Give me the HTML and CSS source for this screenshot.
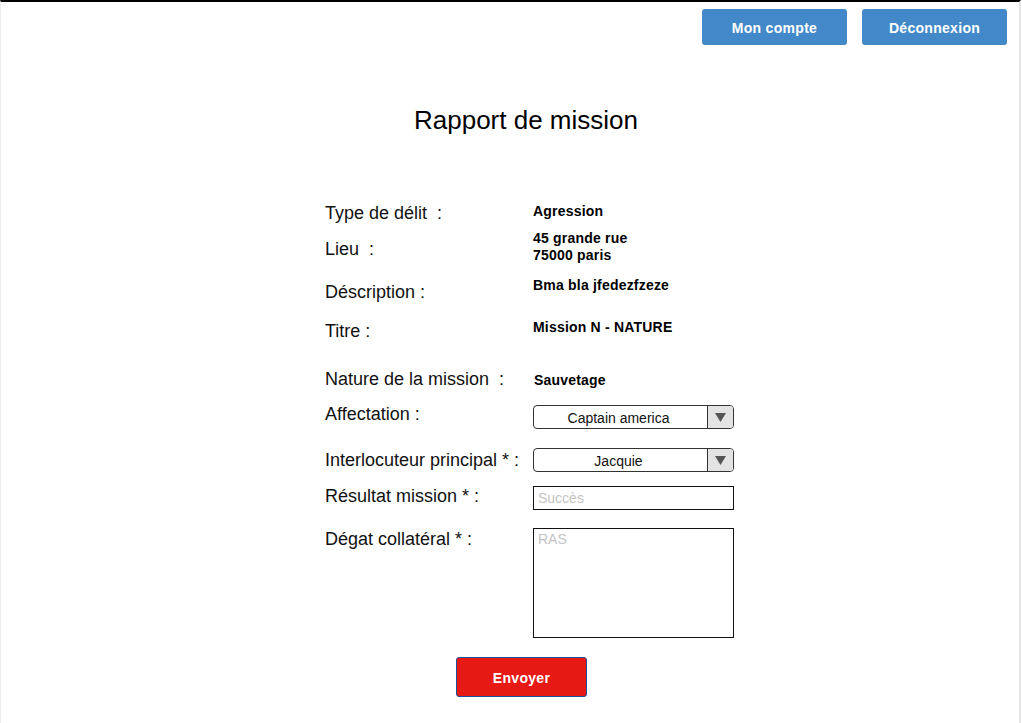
FILE: index.html
```html
<!DOCTYPE html>
<html lang="fr">
<head>
<meta charset="utf-8">
<title>Rapport de mission</title>
<link rel="stylesheet" href="styles.css">
</head>
<body>
<div class="page">
  <header class="topbar">
    <button class="btn btn-blue">Mon compte</button>
    <button class="btn btn-blue">Déconnexion</button>
  </header>

  <h1 class="title">Rapport de mission</h1>

  <form class="form">
    <div class="row r1">
      <span class="label">Type de délit&nbsp; :</span>
      <span class="value">Agression</span>
    </div>
    <div class="row r2">
      <span class="label pad9">Lieu&nbsp; :</span>
      <span class="value">45 grande rue<br>75000 paris</span>
    </div>
    <div class="row r3">
      <span class="label pad5">Déscription :</span>
      <span class="value">Bma bla jfedezfzeze</span>
    </div>
    <div class="row r4">
      <span class="label pad2">Titre :</span>
      <span class="value">Mission N - NATURE</span>
    </div>
    <div class="row r5">
      <span class="label">Nature de la mission&nbsp; :</span>
      <span class="value value-mid">Sauvetage</span>
    </div>
    <div class="row r6">
      <span class="label">Affectation :</span>
      <div class="select mt2">
        <span class="select-text">Captain america</span>
        <span class="select-arrow"><svg width="11" height="9" viewBox="0 0 11 9"><path d="M0 0H11L5.5 9Z" fill="#555"/></svg></span>
      </div>
    </div>
    <div class="row r7">
      <span class="label pad1">Interlocuteur principal * :</span>
      <div class="select">
        <span class="select-text">Jacquie</span>
        <span class="select-arrow"><svg width="11" height="9" viewBox="0 0 11 9"><path d="M0 0H11L5.5 9Z" fill="#555"/></svg></span>
      </div>
    </div>
    <div class="row r8">
      <span class="label">Résultat mission * :</span>
      <div class="input mt1"><span class="placeholder">Succès</span></div>
    </div>
    <div class="row r9">
      <span class="label">Dégat collatéral * :</span>
      <div class="textarea"><span class="placeholder">RAS</span></div>
    </div>
    <div class="actions">
      <button type="button" class="btn btn-red">Envoyer</button>
    </div>
  </form>
</div>
</body>
</html>
```

FILE: styles.css
```css
html, body {
  margin: 0;
  padding: 0;
  background: #fff;
}

body {
  font-family: "Liberation Sans", Arial, sans-serif;
  color: #111;
}

.page {
  width: 1021px;
  height: 723px;
  box-sizing: border-box;
  border-top: 2px solid #000;
  border-left: 1px solid #ececec;
  border-right: 2px solid #e6e6e6;
  overflow: hidden;
}

.topbar {
  display: flex;
  justify-content: flex-end;
  gap: 15px;
  padding: 7px 12px 0 0;
}

.btn {
  font-family: "Liberation Sans", Arial, sans-serif;
  font-weight: bold;
  font-size: 14px;
  letter-spacing: 0.3px;
  color: #fff;
  border: none;
  cursor: pointer;
  padding: 0;
}

.btn-blue {
  width: 145px;
  height: 36px;
  padding-top: 2px;
  background: #4389c9;
  border-radius: 3px;
}

.btn-red {
  width: 131px;
  height: 40px;
  padding-top: 1px;
  background: #e61914;
  border: 1px solid #1f4e9a;
  border-radius: 3px;
}

.title {
  margin: 60px 0 0 0;
  padding-left: 32px;
  text-align: center;
  font-size: 26px;
  line-height: 30px;
  font-weight: normal;
  color: #000;
}

.form {
  margin: 67px 0 0 0;
  padding-left: 324px;
}

.row {
  display: grid;
  grid-template-columns: 208px 201px;
  align-items: start;
}

.r2 { margin-top: 5px; }
.r3 { margin-top: 12px; }
.r4 { margin-top: 15px; }
.r5 { margin-top: 26px; align-items: center; }
.r6 { margin-top: 13px; }
.r7 { margin-top: 19px; }
.r8 { margin-top: 13px; }
.r9 { margin-top: 18px; }

.label {
  font-size: 18px;
  line-height: 22px;
  color: #111;
  white-space: nowrap;
}

.pad1 { padding-top: 1px; }
.pad2 { padding-top: 2px; }
.pad5 { padding-top: 5px; }
.pad9 { padding-top: 9px; }
.mt1 { margin-top: 1px; }
.mt2 { margin-top: 2px; }

.value {
  font-size: 14px;
  font-weight: bold;
  line-height: 17px;
  letter-spacing: 0.2px;
  color: #000;
  padding-top: 1px;
}

.value-mid {
  padding-left: 1px;
  padding-top: 2px;
}

.select {
  display: flex;
  height: 24px;
  box-sizing: border-box;
  border: 1px solid #333;
  border-radius: 4px;
  overflow: hidden;
}

.select-text {
  flex: 1;
  text-align: center;
  font-size: 14px;
  line-height: 22px;
  padding-top: 1px;
  color: #111;
  padding-right: 4px;
}

.select-arrow {
  width: 25px;
  background: #e3e3e3;
  border-left: 1px solid #333;
  display: flex;
  align-items: center;
  justify-content: center;
}

.input {
  height: 24px;
  box-sizing: border-box;
  border: 1px solid #111;
  padding: 0 4px;
  font-size: 14px;
  line-height: 22px;
}

.textarea {
  height: 110px;
  box-sizing: border-box;
  border: 1px solid #111;
  padding: 2px 4px;
  font-size: 14px;
  line-height: 17px;
}

.placeholder {
  color: #c4c4c4;
}

.actions {
  margin-top: 19px;
  padding-left: 131px;
}
```
